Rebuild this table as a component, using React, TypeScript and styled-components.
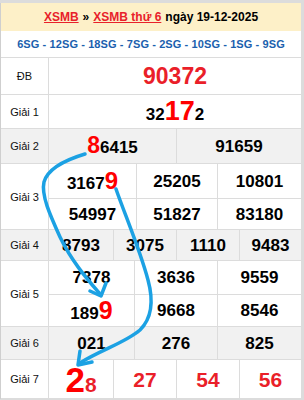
import React from "react";
import styled, { createGlobalStyle } from "styled-components";

const GlobalStyle = createGlobalStyle`
  html, body { margin: 0; padding: 0; }
  body {
    background: #dcdcdc;
    font-family: "Liberation Sans", Arial, sans-serif;
  }
`;

const Page = styled.div`
  position: relative;
  width: 304px;
  height: 400px;
  padding-top: 3px;
  box-sizing: border-box;
  overflow: hidden;
`;

const Table = styled.div`
  width: 301px;
  background: #fff;
  border-left: 1px solid #cfcfcf;
  box-sizing: border-box;
`;

const Header = styled.div`
  height: 28px;
  background: #fdf0c8;
  display: flex;
  align-items: center;
  justify-content: center;
  gap: 4px;
  font-size: 12px;
  font-weight: bold;
  color: #000;
`;

const RedLink = styled.a`
  color: #e8212a;
  text-decoration: underline;
`;

const SGRow = styled.div`
  height: 27px;
  box-sizing: border-box;
  border-bottom: 1px solid #dcdcdc;
  display: flex;
  align-items: center;
  justify-content: center;
  color: #1b5fae;
  font-size: 11px;
  font-weight: bold;
  letter-spacing: 0.1px;
`;

const Row = styled.div<{ $h: number; $gray?: boolean }>`
  display: flex;
  height: ${(p) => p.$h}px;
  box-sizing: border-box;
  border-bottom: 1px solid #dcdcdc;
  background: ${(p) => (p.$gray ? "#f1f1f1" : "#fff")};
`;

const Label = styled.div`
  width: 48px;
  flex: none;
  box-sizing: border-box;
  border-right: 1px solid #dcdcdc;
  display: flex;
  align-items: center;
  justify-content: center;
  font-size: 11px;
  color: #111;
`;

const Values = styled.div<{ $cols: string; $rows?: string }>`
  flex: 1;
  display: grid;
  grid-template-columns: ${(p) => p.$cols};
  grid-template-rows: ${(p) => p.$rows || "1fr"};
`;

const Cell = styled.div<{ $first?: boolean; $top?: boolean }>`
  display: flex;
  align-items: center;
  justify-content: center;
  box-sizing: border-box;
  border-left: ${(p) => (p.$first ? "none" : "1px solid #dcdcdc")};
  border-top: ${(p) => (p.$top ? "1px solid #dcdcdc" : "none")};
  font-size: 17px;
  font-weight: bold;
  color: #000;
  white-space: nowrap;
`;

const Num = styled.span<{ $size?: number; $red?: boolean; $bright?: boolean }>`
  font-size: ${(p) => p.$size ?? 17}px;
  font-weight: bold;
  color: ${(p) => (p.$bright ? "#ff0000" : p.$red ? "#ea1f29" : "#000")};
  line-height: 1;
`;

const Overlay = styled.svg`
  position: absolute;
  left: 0;
  top: 0;
  width: 304px;
  height: 400px;
  pointer-events: none;
`;

type Val = React.ReactNode;

function Grid({ cols, rows, items, perRow }: { cols: string; rows?: string; items: Val[]; perRow: number }) {
  return (
    <Values $cols={cols} $rows={rows}>
      {items.map((it, i) => (
        <Cell key={i} $first={i % perRow === 0} $top={i >= perRow}>
          {it}
        </Cell>
      ))}
    </Values>
  );
}

export default function App() {
  return (
    <>
      <GlobalStyle />
      <Page>
        <Table>
          <Header>
            <RedLink>XSMB</RedLink>
            <span>»</span>
            <RedLink>XSMB thứ 6</RedLink>
            <span>ngày 19-12-2025</span>
          </Header>
          <SGRow>6SG - 12SG - 18SG - 7SG - 2SG - 10SG - 1SG - 9SG</SGRow>

          <Row $h={37}>
            <Label>ĐB</Label>
            <Grid cols="1fr" perRow={1} items={[<Num $size={23} $red>90372</Num>]} />
          </Row>

          <Row $h={34}>
            <Label>Giải 1</Label>
            <Grid
              cols="1fr"
              perRow={1}
              items={[
                <span>
                  <Num>32</Num>
                  <Num $size={27} $bright>17</Num>
                  <Num>2</Num>
                </span>,
              ]}
            />
          </Row>

          <Row $h={35} $gray>
            <Label>Giải 2</Label>
            <Grid
              cols="127px 1fr"
              perRow={2}
              items={[
                <span>
                  <Num $size={23} $bright>8</Num>
                  <Num>6415</Num>
                </span>,
                <Num>91659</Num>,
              ]}
            />
          </Row>

          <Row $h={66}>
            <Label>Giải 3</Label>
            <Grid
              cols="87px 81px 1fr"
              rows="34px 1fr"
              perRow={3}
              items={[
                <span>
                  <Num>3167</Num>
                  <Num $size={24} $bright>9</Num>
                </span>,
                <Num>25205</Num>,
                <Num>10801</Num>,
                <Num>54997</Num>,
                <Num>51827</Num>,
                <Num>83180</Num>,
              ]}
            />
          </Row>

          <Row $h={31} $gray>
            <Label>Giải 4</Label>
            <Grid
              cols="64px 63px 63px 1fr"
              perRow={4}
              items={[<Num>8793</Num>, <Num>3075</Num>, <Num>1110</Num>, <Num>9483</Num>]}
            />
          </Row>

          <Row $h={66}>
            <Label>Giải 5</Label>
            <Grid
              cols="85px 83px 1fr"
              rows="33px 1fr"
              perRow={3}
              items={[
                <Num>7378</Num>,
                <Num>3636</Num>,
                <Num>9559</Num>,
                <span>
                  <Num>189</Num>
                  <Num $size={25} $bright>9</Num>
                </span>,
                <Num>9668</Num>,
                <Num>8546</Num>,
              ]}
            />
          </Row>

          <Row $h={33} $gray>
            <Label>Giải 6</Label>
            <Grid
              cols="85px 83px 1fr"
              perRow={3}
              items={[<Num>021</Num>, <Num>276</Num>, <Num>825</Num>]}
            />
          </Row>

          <Row $h={39}>
            <Label>Giải 7</Label>
            <Grid
              cols="64px 63px 63px 1fr"
              perRow={4}
              items={[
                <span>
                  <Num $size={35} $bright>2</Num>
                  <Num $size={21} $red>8</Num>
                </span>,
                <Num $size={21} $red>27</Num>,
                <Num $size={21} $red>54</Num>,
                <Num $size={21} $red>56</Num>,
              ]}
            />
          </Row>
        </Table>

        <Overlay viewBox="0 0 304 400">
          <g fill="none" stroke="#1ca1e3" strokeWidth={3.5} strokeLinecap="round" strokeLinejoin="round">
            <path d="M85 154 C 65 160, 48 168, 44 182 C 41 195, 50 215, 60 237 C 72 262, 88 280, 100 294" />
            <path d="M90 291 L101 296 L106 283" />
            <path d="M116 189 C 125 215, 140 250, 148 280 C 154 302, 152 318, 140 330 C 125 343, 100 350, 80 363" />
            <path d="M80 351 L78 365 L92 362" />
          </g>
        </Overlay>
      </Page>
    </>
  );
}
